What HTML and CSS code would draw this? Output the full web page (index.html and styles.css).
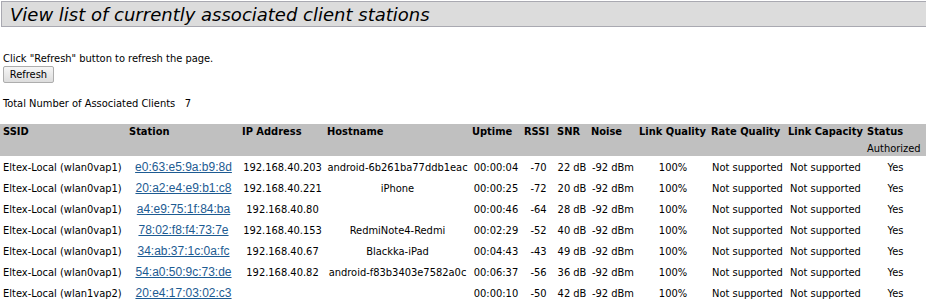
FILE: index.html
```html
<!DOCTYPE html>
<html lang="en">

<head>
    <meta charset="UTF-8">
    <title>Associated Clients</title>
    <link rel="stylesheet" href="styles.css">
</head>

<body>
    <div class="title-bar">
        <h1>View list of currently associated client stations</h1>
    </div>

    <p class="intro">Click "Refresh" button to refresh the page.</p>
    <button type="button" class="btn-refresh">Refresh</button>

    <p class="total">Total Number of Associated Clients&nbsp;&nbsp; 7</p>

    <table class="clients">
        <colgroup>
            <col style="width:127px">
            <col style="width:113px">
            <col style="width:85px">
            <col style="width:145px">
            <col style="width:52px">
            <col style="width:33px">
            <col style="width:34px">
            <col style="width:48px">
            <col style="width:72px">
            <col style="width:77px">
            <col style="width:79px">
            <col style="width:61px">
        </colgroup>
        <thead>
            <tr>
                <th class="first">SSID</th>
                <th>Station</th>
                <th>IP Address</th>
                <th>Hostname</th>
                <th>Uptime</th>
                <th>RSSI</th>
                <th>SNR</th>
                <th>Noise</th>
                <th>Link Quality</th>
                <th>Rate Quality</th>
                <th>Link Capacity</th>
                <th>Status<span class="sub">Authorized</span></th>
            </tr>
        </thead>
        <tbody>
            <tr>
                <td class="ssid">Eltex-Local (wlan0vap1)</td>
                <td><a href="#" class="mac">e0:63:e5:9a:b9:8d</a></td>
                <td>192.168.40.203</td>
                <td>android-6b261ba77ddb1eac</td>
                <td>00:00:04</td>
                <td>-70</td>
                <td>22 dB</td>
                <td>-92 dBm</td>
                <td>100%</td>
                <td>Not supported</td>
                <td>Not supported</td>
                <td>Yes</td>
            </tr>
            <tr>
                <td class="ssid">Eltex-Local (wlan0vap1)</td>
                <td><a href="#" class="mac">20:a2:e4:e9:b1:c8</a></td>
                <td>192.168.40.221</td>
                <td>iPhone</td>
                <td>00:00:25</td>
                <td>-72</td>
                <td>20 dB</td>
                <td>-92 dBm</td>
                <td>100%</td>
                <td>Not supported</td>
                <td>Not supported</td>
                <td>Yes</td>
            </tr>
            <tr>
                <td class="ssid">Eltex-Local (wlan0vap1)</td>
                <td><a href="#" class="mac">a4:e9:75:1f:84:ba</a></td>
                <td>192.168.40.80</td>
                <td></td>
                <td>00:00:46</td>
                <td>-64</td>
                <td>28 dB</td>
                <td>-92 dBm</td>
                <td>100%</td>
                <td>Not supported</td>
                <td>Not supported</td>
                <td>Yes</td>
            </tr>
            <tr>
                <td class="ssid">Eltex-Local (wlan0vap1)</td>
                <td><a href="#" class="mac">78:02:f8:f4:73:7e</a></td>
                <td>192.168.40.153</td>
                <td>RedmiNote4-Redmi</td>
                <td>00:02:29</td>
                <td>-52</td>
                <td>40 dB</td>
                <td>-92 dBm</td>
                <td>100%</td>
                <td>Not supported</td>
                <td>Not supported</td>
                <td>Yes</td>
            </tr>
            <tr>
                <td class="ssid">Eltex-Local (wlan0vap1)</td>
                <td><a href="#" class="mac">34:ab:37:1c:0a:fc</a></td>
                <td>192.168.40.67</td>
                <td>Blackka-iPad</td>
                <td>00:04:43</td>
                <td>-43</td>
                <td>49 dB</td>
                <td>-92 dBm</td>
                <td>100%</td>
                <td>Not supported</td>
                <td>Not supported</td>
                <td>Yes</td>
            </tr>
            <tr>
                <td class="ssid">Eltex-Local (wlan0vap1)</td>
                <td><a href="#" class="mac">54:a0:50:9c:73:de</a></td>
                <td>192.168.40.82</td>
                <td>android-f83b3403e7582a0c</td>
                <td>00:06:37</td>
                <td>-56</td>
                <td>36 dB</td>
                <td>-92 dBm</td>
                <td>100%</td>
                <td>Not supported</td>
                <td>Not supported</td>
                <td>Yes</td>
            </tr>
            <tr>
                <td class="ssid">Eltex-Local (wlan1vap2)</td>
                <td><a href="#" class="mac">20:e4:17:03:02:c3</a></td>
                <td></td>
                <td></td>
                <td>00:00:10</td>
                <td>-50</td>
                <td>42 dB</td>
                <td>-92 dBm</td>
                <td>100%</td>
                <td>Not supported</td>
                <td>Not supported</td>
                <td>Yes</td>
            </tr>
        </tbody>
    </table>
</body>

</html>
```

FILE: styles.css
```css
* {
    box-sizing: border-box;
}

body {
    margin: 0;
    font-family: "DejaVu Sans Condensed", "DejaVu Sans", sans-serif;
    font-size: 11px;
    color: #000;
    background: #fff;
}

.title-bar {
    margin: 1px 0 0 1px;
    height: 26px;
    background-color: #dcdcdc;
    border-top: 1px solid #a9a9b1;
    border-bottom: 1px solid #a9a9b1;
    border-left: 1px solid #a9a9b1;
}

.title-bar h1 {
    margin: 0;
    padding-left: 8px;
    font-family: "DejaVu Sans", sans-serif;
    font-size: 18px;
    font-style: italic;
    font-weight: normal;
    line-height: 25px;
}

.intro {
    margin: 25px 3px 0;
    line-height: 13px;
}

.btn-refresh {
    display: block;
    margin: 1px 0 0 3px;
    width: 51px;
    height: 17px;
    padding: 0;
    font-family: inherit;
    font-size: 11px;
    color: #000;
    background: linear-gradient(#f6f6f6, #dddddd);
    border: 1px solid #adadad;
    border-radius: 2px;
}

.total {
    margin: 14px 3px 0;
    line-height: 13px;
}

.clients {
    margin-top: 14px;
    width: 926px;
    table-layout: fixed;
    border-collapse: collapse;
}

.clients th {
    height: 30px;
    padding: 1px 0 0 2px;
    background-color: #c0c0c0;
    text-align: left;
    vertical-align: top;
    font-weight: bold;
    white-space: nowrap;
    line-height: 14px;
}

.clients th.first {
    padding-left: 3px;
}

.clients th .sub {
    display: block;
    margin-top: 3px;
    font-weight: normal;
}

.clients td {
    height: 21px;
    padding: 1px 0 0;
    text-align: center;
    vertical-align: middle;
    white-space: nowrap;
    overflow: hidden;
}

.clients td.ssid {
    text-align: left;
    padding-left: 3px;
}

.mac {
    font-family: "Liberation Sans", Arial, sans-serif;
    font-size: 12px;
    color: #1d5b92;
}
```
